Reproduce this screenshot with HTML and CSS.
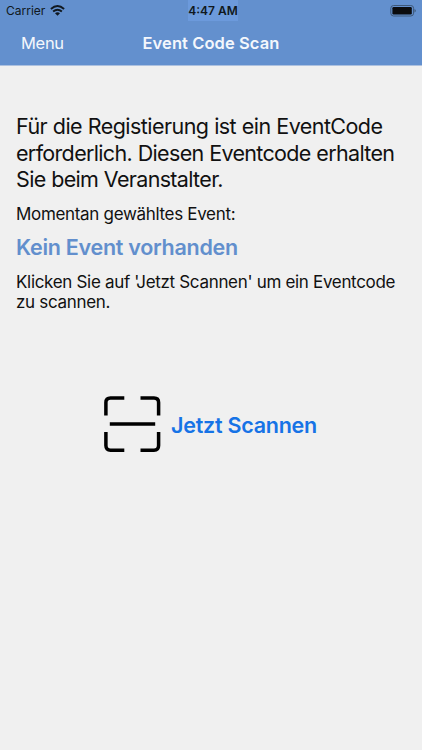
FILE: index.html
```html
<!DOCTYPE html>
<html lang="de">
<head>
<meta charset="utf-8">
<title>Event Code Scan</title>
<link rel="stylesheet" href="styles.css">
</head>
<body>
<header class="top">
  <div class="status">
    <div class="carrier"><span>Carrier</span>
      <svg class="wifi" width="15" height="11" viewBox="0 0 15 11"><path d="M.9 4Q7.5-1.8 14.1 4M3.1 6.5Q7.5 2.8 11.9 6.5" fill="none" stroke="#101820" stroke-width="1.9"/><path d="M5 8.2Q7.5 6.2 10 8.2L7.5 10.7Z" fill="#101820"/></svg>
    </div>
    <div class="time">4:47 AM</div>
    <svg class="battery" width="26" height="12" viewBox="0 0 26 12"><rect x=".8" y=".5" width="22.8" height="10.5" rx="2.8" fill="none" stroke="#3e5878"/><rect x="2.4" y="2" width="19.4" height="7.5" rx="1.2" fill="#0b0c0e"/><path d="M24.5 4v3.6q1.3-.5 1.3-1.8T24.5 4" fill="#3e5878"/></svg>
  </div>
  <nav class="nav"><span class="menu">Menu</span><h1 class="title">Event Code Scan</h1><span></span></nav>
</header>
<main class="content">
  <p class="lead"><span class="first">Für die Registierung ist ein EventCode</span><br>erforderlich. Diesen Eventcode erhalten<br>Sie beim Veranstalter.</p>
  <p class="small label">Momentan gewähltes Event:</p>
  <h2 class="event">Kein Event vorhanden</h2>
  <p class="small hint">Klicken Sie auf 'Jetzt Scannen' um ein Eventcode<br>zu scannen.</p>
  <div class="scan">
    <svg width="58" height="58" viewBox="0 0 58 58" fill="none" stroke="#000" stroke-width="3.5"><path d="M2.9 20.5V7.5Q2.9 2.9 7.5 2.9H21.3M37.5 2.9H51Q55.6 2.9 55.6 7.5V20.5M55.6 37V50.5Q55.6 55.2 51 55.2H37.5M21.3 55.2H7.5Q2.9 55.2 2.9 50.5V37M6.8 29.1H52.2"/></svg>
    <span class="action">Jetzt Scannen</span>
  </div>
</main>
</body>
</html>
```
FILE: styles.css
```css
* { box-sizing: border-box; }
body { margin: 0; min-height: 750px; background: #f0f0f0; color: #111; font-family: Inter, "Liberation Sans", sans-serif; white-space: nowrap; }
p, h1, h2 { margin: 0; }
.top { height: 66px; background: #6390ce; border-bottom: 1px solid #adc1df; }
.status { height: 21px; padding: 0 6px; display: grid; grid-template-columns: 1fr auto 1fr; align-items: center; font-size: 12px; color: #101820; }
.carrier { display: flex; align-items: center; gap: 5px; }
.time { margin-left: 4px; font-weight: 600; font-size: 12px; line-height: 21px; background: #6c9adc; }
.battery { justify-self: end; }
.nav { height: 44px; padding: 0 21px; display: grid; grid-template-columns: 1fr auto 1fr; align-items: center; color: #f4f7fc; }
.menu { font-size: 16.5px; letter-spacing: -.3px; }
.title { font-size: 16.5px; font-weight: 600; letter-spacing: .08px; }
.content { padding: 47px 16px 0; }
.lead { font-size: 21.5px; line-height: 26.7px; letter-spacing: -.66px; word-spacing: .2px; }
.first { letter-spacing: -.55px; }
.small { font-size: 17px; line-height: 20px; letter-spacing: -.32px; }
.label { margin-top: 11px; }
.event { margin-top: 9px; font-size: 21.5px; line-height: 28px; font-weight: 600; letter-spacing: -.28px; color: #628fcd; }
.hint { margin-top: 11px; }
.scan { margin: 83px 0 0 87px; display: flex; align-items: center; gap: 10px; }
.action { padding-top: 2px; font-size: 21.5px; font-weight: 600; letter-spacing: -.25px; color: #1673e6; }
```
